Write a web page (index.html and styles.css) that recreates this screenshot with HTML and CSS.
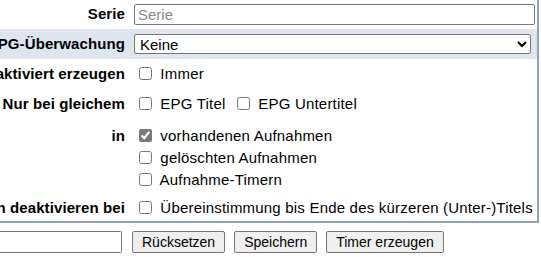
FILE: index.html
```html
<!DOCTYPE html>
<html>
<head>
	<title>Suchtimer</title>
	<link rel="stylesheet" href="styles.css">
</head>
<body>
	<div id="timer_panel">
		<div class="row">
			<div class="label">Serie</div>
			<div class="ctrl"><input type="text" class="text_input" placeholder="Serie"></div>
		</div>
		<div class="row row_hl">
			<div class="label">EPG-Überwachung</div>
			<div class="ctrl">
				<select class="select_input">
					<option>Keine</option>
				</select>
			</div>
		</div>
		<div class="row">
			<div class="label">Deaktiviert erzeugen</div>
			<div class="ctrl">
				<label class="check"><input type="checkbox"> Immer</label>
			</div>
		</div>
		<div class="row">
			<div class="label">Nur bei gleichem</div>
			<div class="ctrl">
				<label class="check"><input type="checkbox"> EPG Titel</label>
				<label class="check"><input type="checkbox"> EPG Untertitel</label>
			</div>
		</div>
		<div class="row row_top">
			<div class="label">in</div>
			<div class="ctrl ctrl_list">
				<label class="check"><input type="checkbox" checked> vorhandenen Aufnahmen</label>
				<label class="check"><input type="checkbox"> gelöschten Aufnahmen</label>
				<label class="check"><input type="checkbox"> Aufnahme-Timern</label>
			</div>
		</div>
		<div class="row row_last">
			<div class="label">Wiederholungen deaktivieren bei</div>
			<div class="ctrl">
				<label class="check"><input type="checkbox"> Übereinstimmung bis Ende des kürzeren (Unter-)Titels</label>
			</div>
		</div>
	</div>

	<div id="timer_buttons">
		<input type="text" class="name_input">
		<button>Rücksetzen</button>
		<button>Speichern</button>
		<button>Timer erzeugen</button>
	</div>
</body>
</html>
```

FILE: styles.css
```css
* {
	margin: 0;
	padding: 0;
	box-sizing: border-box;
}

body {
	font-family: "Liberation Sans", Arial, sans-serif;
	font-size: 15px;
	color: #000;
	background: #fff;
	overflow: hidden;
}

#timer_panel {
	width: 659px;
	margin: -1px 0 0 -120px;
	border-right: 2px solid #8ea3ba;
	border-bottom: 2px solid #8ea3ba;
}

.row {
	display: grid;
	grid-template-columns: 245px 1fr;
	column-gap: 9px;
	align-items: center;
	padding: 4px 0;
}

.row_hl {
	background: #dee5ef;
}

.row_top {
	align-items: start;
	padding: 6px 0 2px;
}

.row_last {
	padding-bottom: 2px;
}

.label {
	font-weight: bold;
	text-align: right;
	white-space: nowrap;
	line-height: 22px;
	letter-spacing: 0.1px;
}

.ctrl {
	padding-right: 2px;
	white-space: nowrap;
	line-height: 22px;
	letter-spacing: 0.2px;
}

.ctrl_list {
	display: flex;
	flex-direction: column;
}

.text_input {
	display: block;
	width: 100%;
	height: 21px;
	padding: 0 3px;
	border: 1px solid #767676;
	border-radius: 2px;
	font: 15px "Liberation Sans", Arial, sans-serif;
}

.text_input::placeholder {
	color: #8a8a8a;
}

.select_input {
	display: block;
	width: calc(100% - 4px);
	height: 20px;
	padding: 0 1px;
	border: 1px solid #767676;
	border-radius: 2px;
	background: #fff;
	font: 15px "Liberation Sans", Arial, sans-serif;
}

.check {
	margin-right: 2px;
}

.check input {
	width: 13px;
	height: 13px;
	margin: 0 4px 0 5px;
	vertical-align: -1px;
	accent-color: #7a7a7a;
}

#timer_buttons {
	display: flex;
	gap: 9px;
	margin-top: 8px;
}

.name_input {
	width: 122px;
	height: 22px;
	margin-right: 1px;
	border: 1px solid #767676;
	border-left: none;
	border-radius: 0 2px 2px 0;
	font: 14px "Liberation Sans", Arial, sans-serif;
}

#timer_buttons button {
	height: 22px;
	padding: 0 9px;
	border: 1px solid #767676;
	border-radius: 2px;
	background: #efefef;
	font: 14px "Liberation Sans", Arial, sans-serif;
	color: #000;
}
```
